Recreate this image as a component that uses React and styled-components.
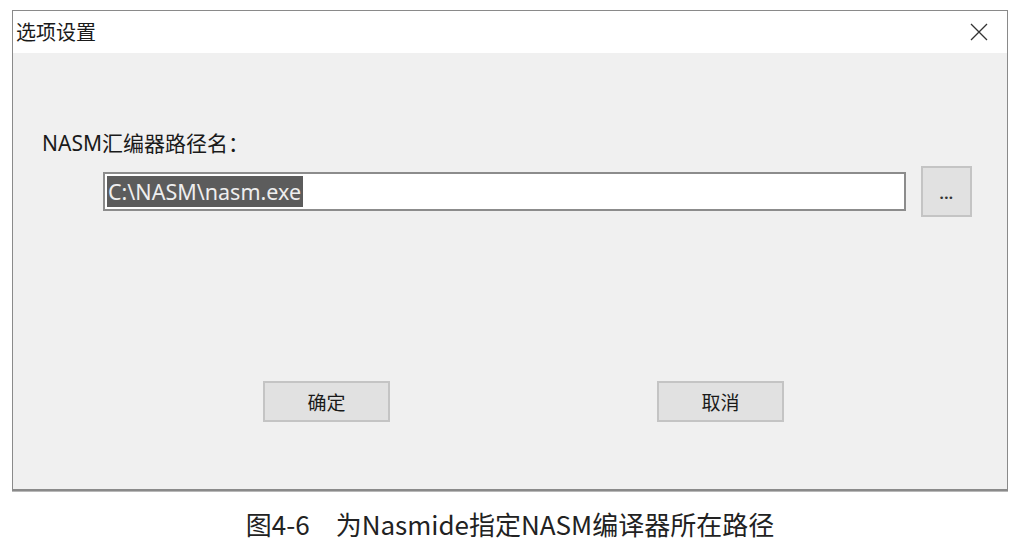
import React from "react";
import styled, { createGlobalStyle } from "styled-components";

const Global = createGlobalStyle`
  html, body { margin: 0; padding: 0; background: #ffffff; }
  body { font-family: "Noto Sans", "Noto Sans CJK SC", sans-serif; }
  * { box-sizing: border-box; }
`;

const Page = styled.div`
  width: 1020px;
  height: 549px;
  padding-top: 10px;
  display: flex;
  flex-direction: column;
`;

const Window = styled.div`
  margin-left: 12px;
  width: 996px;
  height: 481px;
  border: 1px solid #8a8a8a;
  border-bottom: 2px solid #8a8a8a;
  box-shadow: 0 1px 0 #b8b8b8;
  background: #f0f0f0;
  display: flex;
  flex-direction: column;
`;

const TitleBar = styled.div`
  height: 42px;
  background: #ffffff;
  display: flex;
  align-items: center;
  justify-content: space-between;
  padding-left: 3px;
  padding-right: 19px;
`;

const Title = styled.span`
  font-family: "Noto Sans CJK SC", sans-serif;
  font-size: 20px;
  line-height: 24px;
  color: #1a1a1a;
`;

const CloseBox = styled.div`
  width: 18px;
  height: 18px;
  display: flex;
  align-items: center;
  justify-content: center;
`;

const Body = styled.div`
  flex: 1;
  display: flex;
  flex-direction: column;
  padding-top: 78px;
`;

const Label = styled.div`
  margin-left: 29px;
  font-family: "Noto Sans", "Noto Sans CJK SC", sans-serif;
  font-size: 21px;
  line-height: 24px;
  color: #1a1a1a;
`;

const PathRow = styled.div`
  margin-top: 11px;
  margin-left: 90px;
  display: flex;
  align-items: center;
  gap: 15px;
`;

const PathField = styled.div`
  width: 803px;
  height: 39px;
  border: 2px solid #8c8c8c;
  background: #ffffff;
  display: flex;
  align-items: center;
  padding-left: 2px;
`;

const Selected = styled.span`
  background: #5c5c5c;
  color: #eeeeee;
  font-family: "Noto Sans", sans-serif;
  font-size: 21.5px;
  line-height: 31px;
  padding-left: 1px;
  padding-right: 2px;
`;

const Button = styled.div`
  width: ${(p) => p.$w}px;
  height: ${(p) => p.$h}px;
  background: #e1e1e1;
  border: 2px solid #c4c4c4;
  display: flex;
  align-items: center;
  justify-content: center;
  font-family: "Noto Sans CJK SC", sans-serif;
  font-size: ${(p) => p.$fs}px;
  line-height: 1;
  color: #1a1a1a;
`;

const Dots = styled.span`
  font-family: "Noto Sans", sans-serif;
  font-size: 15px;
  font-weight: 700;
  letter-spacing: 0.5px;
  color: #333;
  margin-top: 4px;
`;

const ActionRow = styled.div`
  margin-top: 164px;
  margin-left: 250px;
  display: flex;
  gap: 267px;
`;

const Caption = styled.div`
  margin-top: 16px;
  text-align: center;
  font-family: "Noto Sans CJK SC", sans-serif;
  font-size: 26px;
  line-height: 34px;
  color: #222;
`;

const CloseIcon = () => (
  <svg width="18" height="18" viewBox="0 0 18 18">
    <path d="M1 1 L17 17 M17 1 L1 17" stroke="#333" strokeWidth="1.3" fill="none" />
  </svg>
);

export default function App() {
  return (
    <>
      <Global />
      <Page>
        <Window>
          <TitleBar>
            <Title>选项设置</Title>
            <CloseBox>
              <CloseIcon />
            </CloseBox>
          </TitleBar>
          <Body>
            <Label>NASM汇编器路径名：</Label>
            <PathRow>
              <PathField>
                <Selected>C:\NASM\nasm.exe</Selected>
              </PathField>
              <Button $w={51} $h={51} $fs={14}>
                <Dots>...</Dots>
              </Button>
            </PathRow>
            <ActionRow>
              <Button $w={127} $h={41} $fs={19}>确定</Button>
              <Button $w={127} $h={41} $fs={19}>取消</Button>
            </ActionRow>
          </Body>
        </Window>
        <Caption>图4-6　为Nasmide指定NASM编译器所在路径</Caption>
      </Page>
    </>
  );
}
